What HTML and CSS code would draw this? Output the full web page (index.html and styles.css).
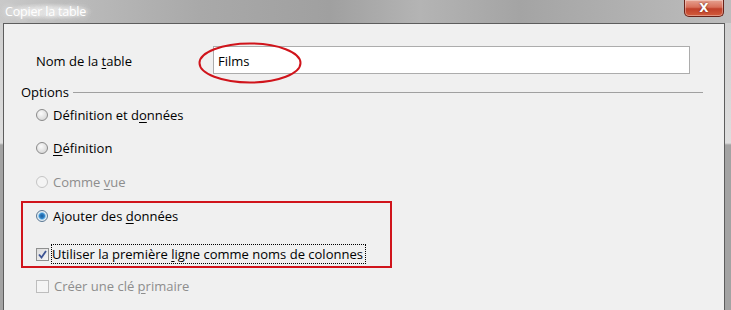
FILE: index.html
```html
<!DOCTYPE html>
<html lang="fr">
<head>
<meta charset="utf-8">
<title>Copier la table</title>
<link rel="stylesheet" href="styles.css">
</head>
<body>
<div class="window">
  <div class="titlebar">
    <span class="title">Copier la table</span>
    <span class="close">X</span>
  </div>
  <div class="frame">
    <div class="client">
      <div class="name-row">
        <label class="name-label">Nom de la <u>t</u>able</label>
        <div class="name-field">
          <div class="input">Films</div>
          <svg class="ellipse" width="106" height="44" viewBox="0 0 106 44"><ellipse cx="53" cy="22" rx="50.5" ry="19.5" fill="none" stroke="#d0141b" stroke-width="2"/></svg>
        </div>
      </div>
      <div class="group-head"><span>Options</span><span class="rule"></span></div>
      <div class="opt r1"><span class="radio"></span><span>Définition et d<u>o</u>nnées</span></div>
      <div class="opt r2"><span class="radio"></span><span><u>D</u>éfinition</span></div>
      <div class="opt r3 disabled"><span class="radio"></span><span>Comme <u>v</u>ue</span></div>
      <div class="highlight">
        <div class="opt r4"><span class="radio checked"></span><span>Ajouter des <u>d</u>onnées</span></div>
        <div class="opt r5"><span class="check"><svg width="9" height="9" viewBox="0 0 9 9"><path d="M1 4.5 L3.5 7.5 L8 1" fill="none" stroke="#3d5494" stroke-width="1.8"/></svg></span><span class="focus">Utiliser la première <u>l</u>igne comme noms de colonnes</span></div>
      </div>
      <div class="opt r6 disabled"><span class="check off"></span><span>Créer une clé <u>p</u>rimaire</span></div>
    </div>
  </div>
</div>
</body>
</html>
```
FILE: styles.css
```css
html, body { margin: 0; padding: 0; }
body { width: 731px; height: 310px; overflow: hidden; font-family: "Open Sans", "Noto Sans", sans-serif; font-size: 13px; color: #000; }
.window { width: 731px; height: 310px; display: flex; flex-direction: column; }
.titlebar {
  height: 23px; display: flex; justify-content: space-between; align-items: flex-start;
  background: linear-gradient(90deg, #c9c9c9 0, #bdbdbd 60px, #a9a9a9 200px, #a0a0a0 330px, #b4b4b4 420px, #a4a4a4 520px, #b2b2b2 640px, #bdbdbd 731px);
}
.title {
  margin: 3px 0 0 5px; color: #fff; font-size: 12.5px; line-height: 17px;
  text-shadow: 0 0 6px rgba(255,255,255,0.9), 0 0 10px rgba(230,230,230,0.9);
  background: radial-gradient(ellipse at center, rgba(235,235,235,0.7) 30%, rgba(235,235,235,0) 72%);
  padding: 0 6px 0 0; letter-spacing: -0.2px;
}
.close {
  width: 40px; height: 17px; margin-right: 7px; box-sizing: border-box;
  border: 1px solid #6a2218; border-top: none; border-radius: 0 0 5px 5px;
  background: linear-gradient(#e6a190 0, #d8705a 45%, #c0402a 55%, #d25c3c 100%);
  color: #fff; font-family: "DejaVu Sans", sans-serif; font-weight: bold; font-size: 12px; line-height: 16px;
  text-align: center; text-shadow: 0 0 2px #5a1a10;
  box-shadow: inset 0 0 0 1px rgba(255,255,255,0.35);
}
.frame {
  flex: 1; display: flex; padding: 0 6px 0 3px;
  background: linear-gradient(#cfcfcf 0, #dedede 120px, #a3a3a3 122px, #a3a3a3 100%);
}
.client {
  flex: 1; background: #f0f0f0; border: 1px solid #5d5d5d; border-bottom: none;
  display: flex; flex-direction: column; position: relative;
}
u { text-decoration: underline; text-underline-offset: 2px; }
.name-row { display: flex; align-items: center; margin-top: 22px; height: 28px; }
.name-label { margin-left: 32px; width: 177px; padding-top: 2px; }
.name-field { position: relative; }
.input {
  width: 477px; height: 28px; box-sizing: border-box; border: 1px solid #acacac; background: #fff;
  padding: 2px 0 0 4px; line-height: 24px;
}
.ellipse { position: absolute; left: -16px; top: -5px; }
.group-head { display: flex; align-items: center; margin: 9px 0 0 17px; height: 18px; }
.rule { width: 630px; height: 1px; background: #a0a0a0; margin-left: 4px; margin-top: 1px; }
.opt { display: flex; align-items: center; height: 18px; margin-left: 32px; }
.opt > span:last-child { margin-left: 5px; }
.r1 { margin-top: 5px; }
.r2 { margin-top: 15px; }
.r3 { margin-top: 16px; }
.disabled { color: #8d8d8d; }
.radio {
  width: 12px; height: 12px; box-sizing: border-box; border-radius: 50%;
  border: 1px solid #8a8a8a;
  background: radial-gradient(circle at 40% 35%, #fbfbfb 0, #e4e4e4 50%, #cfcfcf 100%);
}
.disabled .radio { border-color: #c4c4c4; background: #f4f4f4; }
.radio.checked {
  background: radial-gradient(circle at 50% 50%, #1c5a9a 0, #2f84c8 2.5px, #9fd0f0 3.6px, #e6eef4 4.2px, #dcdcdc 100%);
  border-color: #5a7894;
}
.highlight {
  margin: 10px 0 0 17px; width: 371px; height: 67px; box-sizing: border-box;
  border: 2px solid #d0141b; display: flex; flex-direction: column;
}
.highlight .opt { margin-left: 13px; }
.r4 { margin-top: 4px; }
.r5 { margin-top: 20px; }
.check {
  width: 13px; height: 13px; box-sizing: border-box; border: 1px solid #8e8f8f;
  background: linear-gradient(135deg, #dcdcdc, #f6f6f6);
  display: flex; align-items: center; justify-content: center;
}
.check.off { border-color: #bdbdbd; background: #f4f4f4; }
.focus { outline: 1px dotted #000; outline-offset: 0; padding: 1px 2px 1px 0; line-height: 16px; margin-left: 3px !important; }
.r6 { margin-top: 9px; }
```
